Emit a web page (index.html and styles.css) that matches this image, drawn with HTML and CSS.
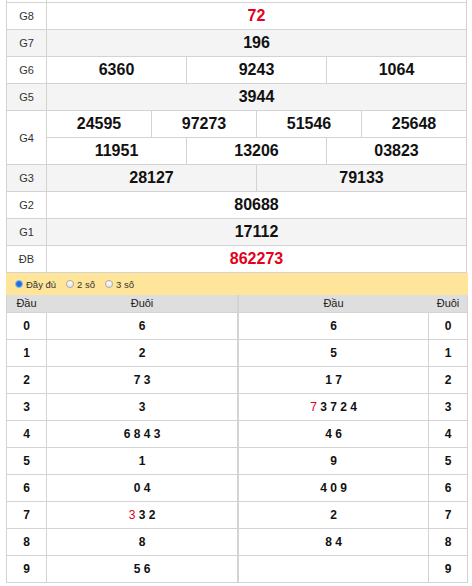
FILE: index.html
```html
<!DOCTYPE html>
<html lang="vi">
<head>
<meta charset="utf-8">
<title>Kết quả xổ số</title>
<link rel="stylesheet" href="styles.css">
</head>
<body>
<div class="page">
  <div class="kq">
    <div class="row stub"><div class="lbl"></div><div class="vals"><div class="line"><div class="c"></div></div></div></div>
    <div class="row"><div class="lbl">G8</div><div class="vals"><div class="line"><div class="c red">72</div></div></div></div>
    <div class="row alt"><div class="lbl">G7</div><div class="vals"><div class="line"><div class="c">196</div></div></div></div>
    <div class="row"><div class="lbl">G6</div><div class="vals"><div class="line"><div class="c">6360</div><div class="c">9243</div><div class="c">1064</div></div></div></div>
    <div class="row alt"><div class="lbl">G5</div><div class="vals"><div class="line"><div class="c">3944</div></div></div></div>
    <div class="row"><div class="lbl">G4</div><div class="vals">
      <div class="line"><div class="c">24595</div><div class="c">97273</div><div class="c">51546</div><div class="c">25648</div></div>
      <div class="line"><div class="c">11951</div><div class="c">13206</div><div class="c">03823</div></div>
    </div></div>
    <div class="row alt"><div class="lbl">G3</div><div class="vals"><div class="line"><div class="c">28127</div><div class="c">79133</div></div></div></div>
    <div class="row"><div class="lbl">G2</div><div class="vals"><div class="line"><div class="c">80688</div></div></div></div>
    <div class="row alt"><div class="lbl">G1</div><div class="vals"><div class="line"><div class="c">17112</div></div></div></div>
    <div class="row"><div class="lbl">ĐB</div><div class="vals"><div class="line"><div class="c red">862273</div></div></div></div>
  </div>

  <div class="opts">
    <label class="opt"><input type="radio" name="mode" checked><span>Đầy đủ</span></label>
    <label class="opt"><input type="radio" name="mode"><span>2 số</span></label>
    <label class="opt"><input type="radio" name="mode"><span>3 số</span></label>
  </div>

  <div class="loto">
    <div class="half left">
      <div class="h">Đầu</div><div class="h">Đuôi</div>
      <div class="d">0</div><div class="d">6</div>
      <div class="d">1</div><div class="d">2</div>
      <div class="d">2</div><div class="d">7 3</div>
      <div class="d">3</div><div class="d">3</div>
      <div class="d">4</div><div class="d">6 8 4 3</div>
      <div class="d">5</div><div class="d">1</div>
      <div class="d">6</div><div class="d">0 4</div>
      <div class="d">7</div><div class="d"><span class="r">3</span> 3 2</div>
      <div class="d">8</div><div class="d">8</div>
      <div class="d">9</div><div class="d">5 6</div>
    </div>
    <div class="half right">
      <div class="h">Đầu</div><div class="h">Đuôi</div>
      <div class="d">6</div><div class="d">0</div>
      <div class="d">5</div><div class="d">1</div>
      <div class="d">1 7</div><div class="d">2</div>
      <div class="d"><span class="r">7</span> 3 7 2 4</div><div class="d">3</div>
      <div class="d">4 6</div><div class="d">4</div>
      <div class="d">9</div><div class="d">5</div>
      <div class="d">4 0 9</div><div class="d">6</div>
      <div class="d">2</div><div class="d">7</div>
      <div class="d">8 4</div><div class="d">8</div>
      <div class="d"></div><div class="d">9</div>
    </div>
  </div>
</div>
</body>
</html>
```
FILE: styles.css
```css
* { box-sizing: border-box; }

html, body {
  margin: 0;
  padding: 0;
  background: #fff;
}

body {
  font-family: "Liberation Sans", Arial, sans-serif;
  color: #222;
}

.page {
  padding-left: 6px;
}

/* Results table */
.kq {
  width: 461px;
  border-left: 1px solid #d3d3d3;
}

.row {
  display: grid;
  grid-template-columns: 40px 1fr;
  background: #fff;
}

.row.alt {
  background: #f4f4f4;
}

.lbl {
  display: flex;
  align-items: center;
  justify-content: center;
  border-right: 1px solid #d3d3d3;
  border-bottom: 1px solid #d3d3d3;
  font-size: 11px;
  color: #333;
}

.vals {
  display: flex;
  flex-direction: column;
}

.line {
  display: flex;
}

.c {
  flex: 1 1 0;
  height: 27px;
  line-height: 26px;
  border-right: 1px solid #d3d3d3;
  border-bottom: 1px solid #d3d3d3;
  text-align: center;
  font-size: 16px;
  font-weight: bold;
  color: #111;
}

.c.red {
  color: #e2001a;
}

.stub .c {
  height: 3px;
}

/* Options bar */
.opts {
  width: 462px;
  height: 22px;
  background: #ffe59a;
  display: flex;
  align-items: center;
  gap: 10px;
  padding-left: 9px;
  margin-top: 0;
}

.opt {
  display: flex;
  align-items: center;
  gap: 3px;
  font-size: 9.5px;
  color: #333;
}

.opt input {
  -webkit-appearance: none;
  appearance: none;
  margin: 0;
  width: 8px;
  height: 8px;
  border-radius: 50%;
  border: 1px solid #a9a9a9;
  background: linear-gradient(#fdfdfd, #e6e6e6);
}

.opt input:checked {
  border-color: #7aaef0;
  background: radial-gradient(circle, #1f6fe0 0 2.5px, #3d8cf0 3px);
}

/* Loto table */
.loto {
  display: flex;
  width: 462px;
}

.half {
  display: grid;
  border-left: 1px solid #d3d3d3;
}

.half.left {
  width: 232px;
  grid-template-columns: 40px 191px;
}

.half.right {
  width: 230px;
  grid-template-columns: 190px 39px;
}

.h {
  height: 18px;
  line-height: 17px;
  background: #dedede;
  border-bottom: 1px solid #d3d3d3;
  border-right: 1px solid #d3d3d3;
  text-align: center;
  font-size: 11px;
  color: #222;
}

.h:nth-child(1) {
  border-right-color: #dedede;
}

.d {
  height: 27px;
  line-height: 26px;
  border-bottom: 1px solid #d3d3d3;
  border-right: 1px solid #d3d3d3;
  text-align: center;
  font-size: 12px;
  font-weight: bold;
  color: #111;
}

.r {
  color: #e2001a;
  font-weight: normal;
}
```
